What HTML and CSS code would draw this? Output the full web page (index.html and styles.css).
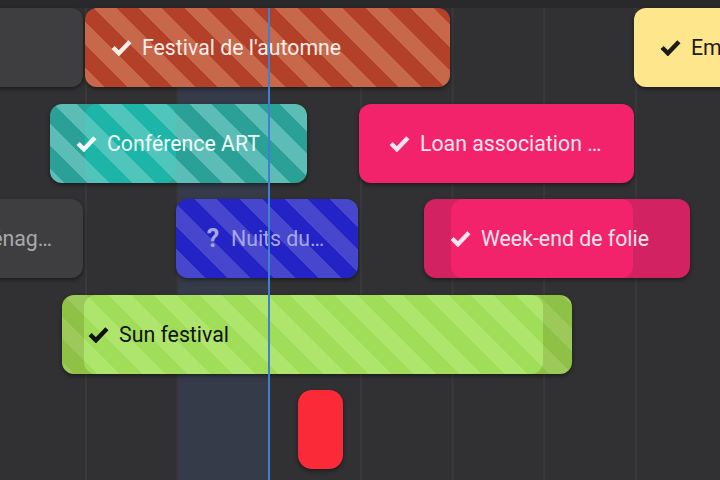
FILE: index.html
```html
<!DOCTYPE html>
<html lang="fr">
<head>
<meta charset="utf-8">
<title>Planning</title>
<link rel="stylesheet" href="styles.css">
</head>
<body>
<div class="timeline">
  <div class="header"></div>
  <div class="grid">
    <div class="lanes">
      <div class="lane">
        <div class="ev ev-grey" style="left:-160px;width:243px"></div>
        <div class="ev ev-orange" style="left:85px;width:365px">
          <div class="label" style="padding-left:26px">
            <svg class="ic" viewBox="0 0 20 16"><path d="M2 8 L7.5 13.5 L18 2.5"/></svg>
            <span>Festival de l'automne</span>
          </div>
        </div>
        <div class="ev ev-yellow" style="left:634px;width:200px">
          <div class="label" style="padding-left:26px">
            <svg class="ic" viewBox="0 0 20 16"><path d="M2 8 L7.5 13.5 L18 2.5"/></svg>
            <span>Emploi</span>
          </div>
        </div>
      </div>
      <div class="lane">
        <div class="ev ev-teal" style="left:50px;width:257px">
          <div class="core" style="left:35px;width:91px"></div>
          <div class="label" style="padding-left:26px">
            <svg class="ic" viewBox="0 0 20 16"><path d="M2 8 L7.5 13.5 L18 2.5"/></svg>
            <span>Conférence ART</span>
          </div>
        </div>
        <div class="ev ev-pink" style="left:359px;width:275px">
          <div class="label" style="padding-left:30px">
            <svg class="ic" viewBox="0 0 20 16"><path d="M2 8 L7.5 13.5 L18 2.5"/></svg>
            <span>Loan association …</span>
          </div>
        </div>
      </div>
      <div class="lane">
        <div class="ev ev-grey" style="left:-160px;width:243px">
          <div class="label label-end">
            <span>Aménag…</span>
          </div>
        </div>
        <div class="ev ev-blue" style="left:176px;width:182px">
          <div class="label" style="padding-left:29px">
            <span class="q">?</span>
            <span>Nuits du…</span>
          </div>
        </div>
        <div class="ev ev-rose" style="left:424px;width:266px">
          <div class="core" style="left:27px;width:182px"></div>
          <div class="label" style="padding-left:26px">
            <svg class="ic" viewBox="0 0 20 16"><path d="M2 8 L7.5 13.5 L18 2.5"/></svg>
            <span>Week-end de folie</span>
          </div>
        </div>
      </div>
      <div class="lane">
        <div class="ev ev-green" style="left:62px;width:510px">
          <div class="core" style="left:22px;width:459px"></div>
          <div class="label" style="padding-left:26px">
            <svg class="ic" viewBox="0 0 20 16"><path d="M2 8 L7.5 13.5 L18 2.5"/></svg>
            <span>Sun festival</span>
          </div>
        </div>
      </div>
      <div class="lane">
        <div class="ev ev-red" style="left:298px;width:45px"></div>
      </div>
    </div>
    <div class="now"></div>
  </div>
</div>
</body>
</html>
```
FILE: styles.css
```css
* { box-sizing: border-box; }
html, body { margin: 0; padding: 0; }
body {
  background: #313133;
  font-family: Roboto, "Liberation Sans", sans-serif;
}
.timeline {
  width: 720px;
  height: 480px;
  overflow: hidden;
  display: flex;
  flex-direction: column;
}
.header {
  height: 8px;
  flex: none;
  background: #29292b;
}
.grid {
  position: relative;
  flex: 1;
  background-color: #313133;
  background-image:
    linear-gradient(to right, #39393b 0 2px, transparent 2px),
    linear-gradient(#363b4a, #363b4a);
  background-size: 91.67px 100%, 91px 100%;
  background-position: 85px 0, 177px 0;
  background-repeat: repeat-x, no-repeat;
}
.lanes {
  display: flex;
  flex-direction: column;
  gap: 16.5px;
}
.lane {
  position: relative;
  height: 79px;
}
.ev {
  position: absolute;
  top: 0;
  height: 79px;
  border-radius: 12px;
  overflow: hidden;
  box-shadow: 0 2px 4px rgba(0, 0, 0, 0.45);
  background-attachment: fixed;
}
.core {
  position: absolute;
  top: 0;
  bottom: 0;
  border-radius: 12px;
  background-attachment: fixed;
}
.label {
  position: relative;
  height: 100%;
  display: flex;
  align-items: center;
  gap: 10px;
  font-size: 21.3px;
  white-space: nowrap;
  color: #fbeee9;
}
.label-end {
  justify-content: flex-end;
  padding-right: 31px;
  color: #a9a9ab;
}
.ic {
  width: 21px;
  height: 17px;
  flex: none;
  fill: none;
  stroke: currentColor;
  stroke-width: 4.2;
}
.q {
  font-weight: 700;
  font-size: 25px;
  width: 16px;
  text-align: center;
}

.ev-grey { background-color: #3e3e40; }
.ev-orange {
  background-image: repeating-linear-gradient(45deg, #b3412a 0 16px, #c7684a 16px 32px);
}
.ev-yellow { background-color: #fde68b; }
.ev-yellow .label { color: #1c1c1c; }
.ev-teal {
  background-image: repeating-linear-gradient(45deg, #2aa096 0 16px, #5bbdb5 16px 32px);
}
.ev-teal .core {
  background-image: repeating-linear-gradient(45deg, #1db5a8 0 16px, #4fc5bc 16px 32px);
}
.ev-teal .label { color: #effcfa; }
.ev-pink { background-color: #f2226b; }
.ev-pink .label { color: #fde4ec; }
.ev-blue {
  background-image: repeating-linear-gradient(45deg, #2323c6 0 16px, #4747cd 16px 32px);
}
.ev-blue .label { color: #a6a6e6; }
.ev-rose { background-color: #d22262; }
.ev-rose .core { background-color: #f2226b; }
.ev-rose .label { color: #fde4ec; }
.ev-green {
  background-image: repeating-linear-gradient(45deg, #8fc146 0 16px, #9dc95b 16px 32px);
}
.ev-green .core {
  background-image: repeating-linear-gradient(45deg, #a0dd58 0 16px, #aee56c 16px 32px);
}
.ev-green .label { color: #111111; }
.ev-red {
  background-color: #fb2a38;
  border-radius: 14px;
}

.now {
  position: absolute;
  top: 0;
  bottom: 0;
  left: 268px;
  width: 2px;
  background: #3f7fcf;
}
```
